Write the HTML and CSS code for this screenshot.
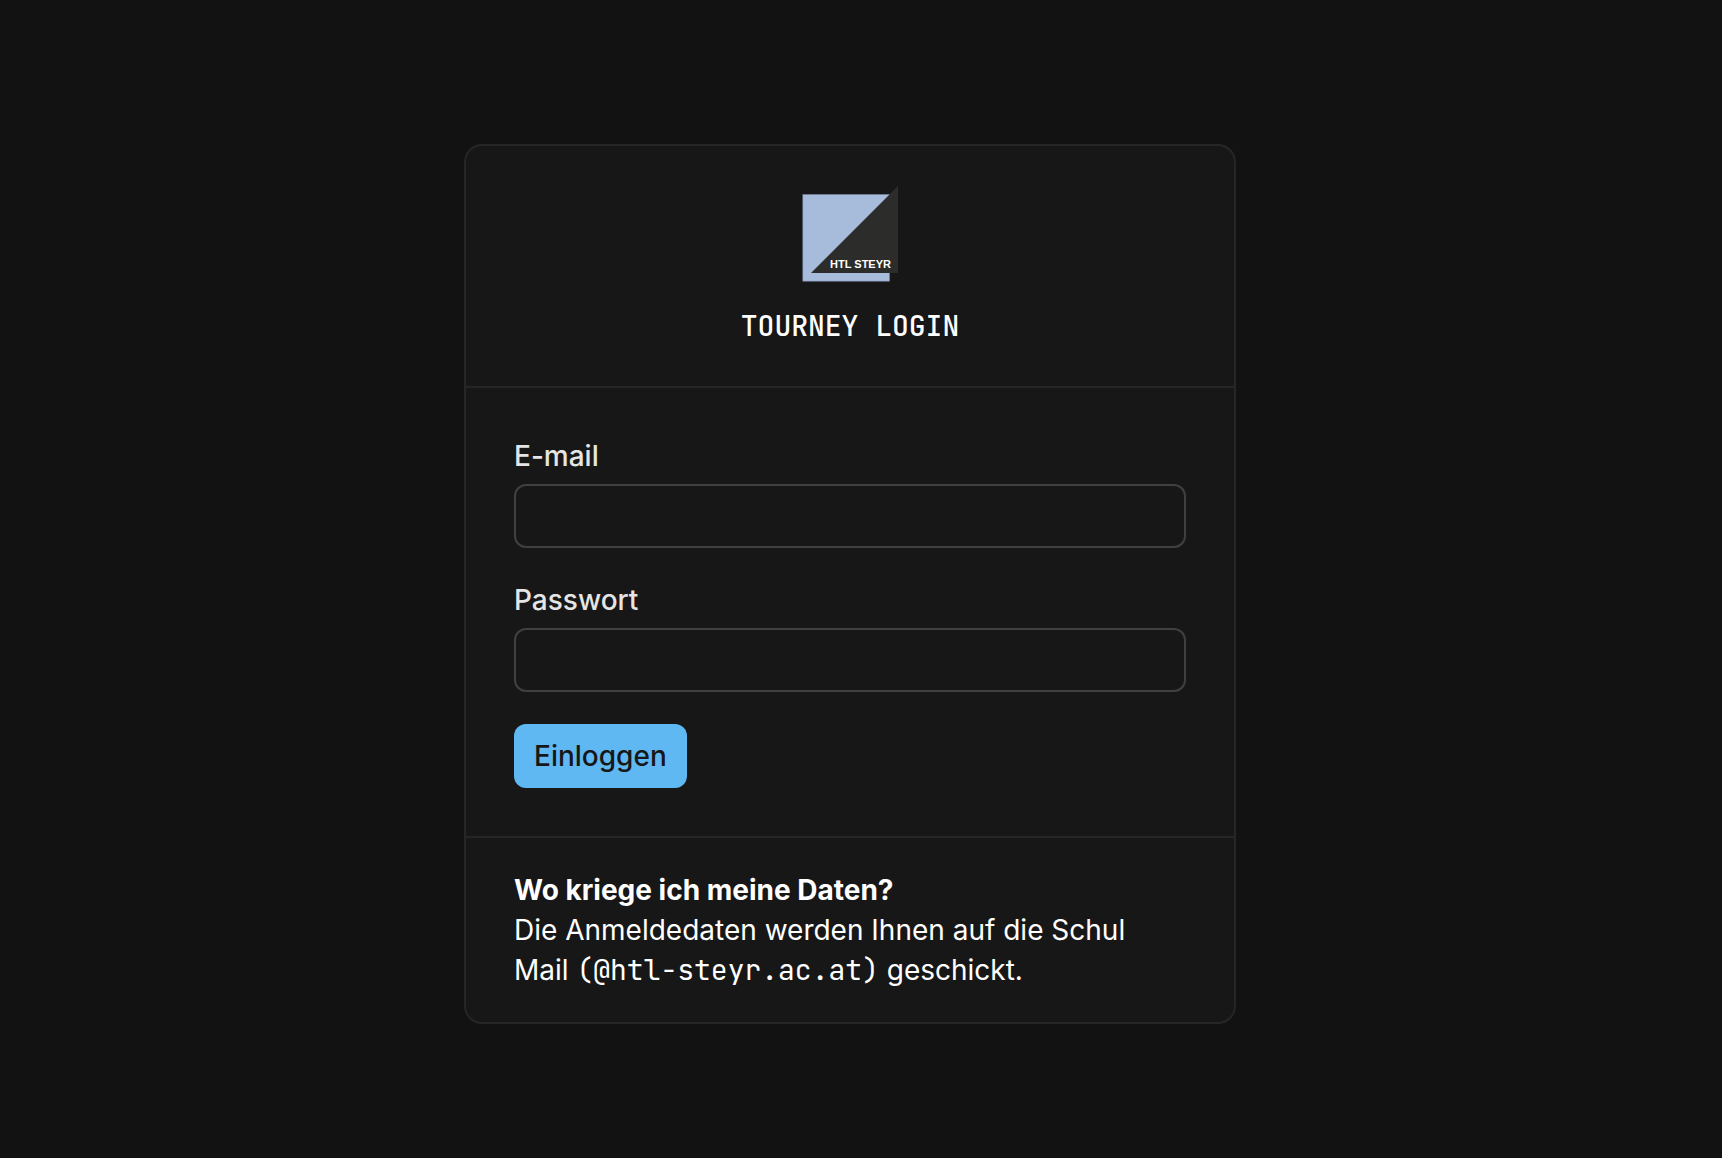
FILE: index.html
```html
<!DOCTYPE html>
<html lang="de">
<head>
<meta charset="utf-8">
<meta name="viewport" content="width=device-width, initial-scale=1">
<title>Tourney Login</title>
<link rel="stylesheet" href="styles.css">
</head>
<body>
<main class="page">
  <section class="card">
    <header class="card-header">
      <svg class="logo" viewBox="0 0 96 96" role="img" aria-label="HTL Steyr">
        <rect x="0.8" y="8.4" width="86.8" height="86.8" fill="#a7bbdb" stroke="#6f7d94" stroke-width="0.6"/>
        <path d="M96 0V87H9Z" fill="#2c2c2a"/>
        <text class="logo-text" x="89" y="82" text-anchor="end">HTL STEYR</text>
      </svg>
      <h1 class="title">TOURNEY LOGIN</h1>
    </header>
    <form class="login-form">
      <div class="field">
        <label for="email">E-mail</label>
        <input class="input" id="email" name="email" type="email" autocomplete="username">
      </div>
      <div class="field">
        <label for="password">Passwort</label>
        <input class="input" id="password" name="password" type="password" autocomplete="current-password">
      </div>
      <button class="submit" type="submit">Einloggen</button>
    </form>
    <footer class="card-footer">
      <strong>Wo kriege ich meine Daten?</strong>
      <p class="hint">Die Anmeldedaten werden Ihnen auf die Schul Mail <span class="mono">(@htl-steyr.ac.at)</span> geschickt.</p>
    </footer>
  </section>
</main>
</body>
</html>
```
FILE: styles.css
```css
*,
*::before,
*::after {
  box-sizing: border-box;
}

body {
  margin: 0;
  background: #121212;
  color: #fff;
  font: 400 28px/40px Inter, "Liberation Sans", sans-serif;
}

.page {
  display: flex;
  justify-content: center;
  padding: 144px 22px 134px 0;
}

.card {
  width: 100%;
  max-width: 772px;
  background: #171717;
  border: 2px solid #262626;
  border-radius: 18px;
}

.card-header {
  display: flex;
  flex-direction: column;
  align-items: center;
  gap: 24px;
  padding: 40px 48px;
  border-bottom: 2px solid #262626;
}

.logo {
  display: block;
  width: 96px;
  height: 96px;
}

.logo-text {
  fill: #fff;
  font: 700 11px "Liberation Sans", Arial, sans-serif;
}

.title {
  margin: 0;
  font: 500 28px/40px "JetBrains Mono", "DejaVu Sans Mono", monospace;
}

.login-form {
  display: flex;
  flex-direction: column;
  align-items: flex-start;
  gap: 32px;
  padding: 48px;
}

.field {
  display: flex;
  flex-direction: column;
  gap: 8px;
  width: 100%;
  color: #e5e5e5;
  font-weight: 500;
}

.input {
  width: 100%;
  height: 64px;
  padding: 0 20px;
  background: transparent;
  border: 2px solid #404040;
  border-radius: 12px;
  color: inherit;
  font: inherit;
}

.submit {
  padding: 12px 20px;
  background: #60b8f2;
  border: 0;
  border-radius: 12px;
  color: #171717;
  font: inherit;
  font-weight: 500;
}

.card-footer {
  padding: 32px 48px;
  border-top: 2px solid #262626;
}

.hint {
  margin: 0;
}

.mono {
  font-family: "JetBrains Mono", "DejaVu Sans Mono", monospace;
}
```
